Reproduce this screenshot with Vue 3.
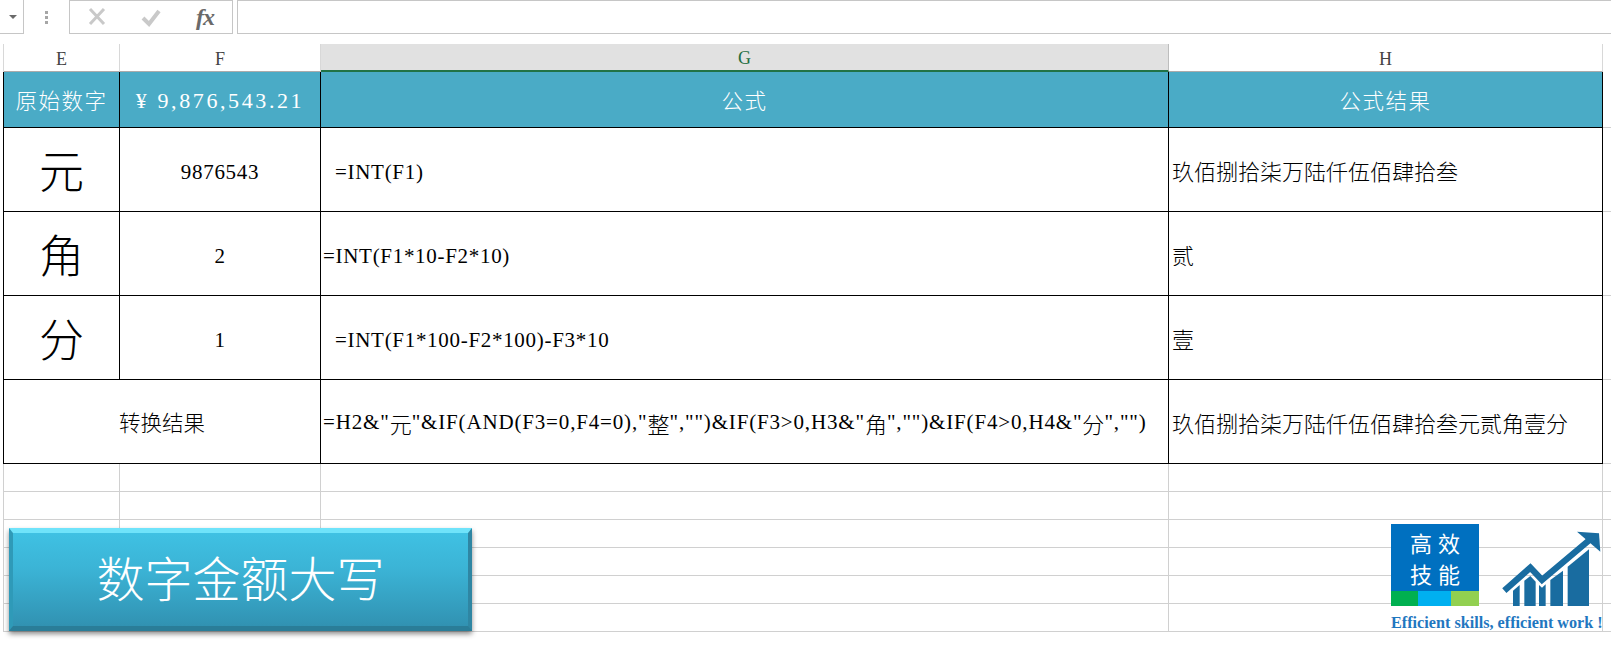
<script setup>
const columns = [
  { name: 'E', cls: '' },
  { name: 'F', cls: '' },
  { name: 'G', cls: 'selected' },
  { name: 'H', cls: '' },
  { name: '', cls: 'last' }
]
const rows = [
  { big: '元', value: '9876543', formula: '=INT(F1)', indent: true, result: '玖佰捌拾柒万陆仟伍佰肆拾叁' },
  { big: '角', value: '2', formula: '=INT(F1*10-F2*10)', indent: false, result: '贰' },
  { big: '分', value: '1', formula: '=INT(F1*100-F2*100)-F3*10', indent: true, result: '壹' }
]
const totalFormula = [
  { t: '=H2&"' }, { t: '元', c: true }, { t: '"&IF(AND(F3=0,F4=0),"' }, { t: '整', c: true },
  { t: '","")&IF(F3>0,H3&"' }, { t: '角', c: true }, { t: '","")&IF(F4>0,H4&"' }, { t: '分', c: true }, { t: '","")' }
]
const emptyRows = [1, 2, 3, 4, 5, 6]
const emptyCols = [1, 2, 3, 4, 5]
</script>

<template>
  <div class="app">
    <div class="toolbar">
      <div class="namebox"><span class="caret"></span></div>
      <div class="dots"><i></i><i></i><i></i></div>
      <div class="fx-buttons">
        <svg class="tool" width="22" height="22" viewBox="0 0 22 22"><path d="M4 3 L18 18 M18 3 L4 18" stroke="#c9c9c9" stroke-width="3" fill="none"/></svg>
        <svg class="tool" width="22" height="22" viewBox="0 0 22 22"><path d="M3 12 L9 18 L19 5" stroke="#c9c9c9" stroke-width="4" fill="none"/></svg>
        <span class="fx">fx</span>
      </div>
      <div class="formula-input"></div>
    </div>

    <div class="sheet">
      <div class="col-headers">
        <div v-for="c in columns" :key="c.name" class="col-header" :class="c.cls">{{ c.name }}</div>
      </div>

      <div class="table">
        <div class="cell head">原始数字</div>
        <div class="cell head amount">¥ 9,876,543.21</div>
        <div class="cell head">公式</div>
        <div class="cell head">公式结果</div>
        <div class="cell blank"></div>

        <template v-for="r in rows" :key="r.big">
          <div class="cell big">{{ r.big }}</div>
          <div class="cell latin center">{{ r.value }}</div>
          <div class="cell latin left" :class="{ indent: r.indent }">{{ r.formula }}</div>
          <div class="cell cjk left">{{ r.result }}</div>
          <div class="cell blank"></div>
        </template>

        <div class="cell cjk center merged">转换结果</div>
        <div class="cell latin left mixed"><template v-for="(p, i) in totalFormula" :key="i"><span v-if="p.c" class="inline-cjk">{{ p.t }}</span><template v-else>{{ p.t }}</template></template></div>
        <div class="cell cjk left">玖佰捌拾柒万陆仟伍佰肆拾叁元贰角壹分</div>
        <div class="cell blank"></div>
      </div>

      <div v-for="n in emptyRows" :key="n" class="grid-row">
        <div v-for="m in emptyCols" :key="m" class="grid-cell"></div>
      </div>

      <div class="shape-button"><span>数字金额大写</span></div>

      <div class="logo">
        <div class="logo-top">
          <div class="logo-box">
            <div class="logo-text">
              <span>高效</span>
              <span>技能</span>
            </div>
            <div class="logo-strip"><i class="s1"></i><i class="s2"></i><i class="s3"></i></div>
          </div>
          <svg class="chart" width="100" height="76" viewBox="422 90 300 228">
            <g fill="#196ca0">
              <polygon points="458,318 458,272 478,255 478,318" />
              <polygon points="492,318 492,242 510,228 526,245 526,318" />
              <polygon points="536,318 536,255 545,263 556,253 556,318" />
              <polygon points="570,318 570,240 608,212 608,318" />
              <polygon points="622,318 622,200 686,148 686,318" />
              <polygon points="650,95 716,100 720,155" />
            </g>
            <polyline points="432,272 510,203 545,240 685,122" fill="none" stroke="#196ca0" stroke-width="19" />
          </svg>
        </div>
        <div class="logo-caption">Efficient skills, efficient work !</div>
      </div>
    </div>
  </div>
</template>

<style scoped>
.app {
  width: 1611px;
  height: 645px;
  overflow: hidden;
  background: #fff;
  position: relative;
  font-family: "Liberation Serif", "Noto Sans CJK SC", serif;
}
.toolbar {
  display: flex;
  height: 34px;
  box-sizing: border-box;
}
.namebox {
  width: 24px;
  height: 34px;
  box-sizing: border-box;
  border: 1px solid #c6c6c6;
  border-left: 0;
  border-top: 0;
  display: flex;
  align-items: center;
  justify-content: center;
}
.caret {
  width: 0;
  height: 0;
  border-left: 4px solid transparent;
  border-right: 4px solid transparent;
  border-top: 4px solid #6a6a6a;
  margin-left: 2px;
}
.dots {
  width: 45px;
  display: flex;
  flex-direction: column;
  align-items: center;
  justify-content: center;
  gap: 2px;
}
.dots i {
  width: 3px;
  height: 3px;
  background: #a6a6a6;
}
.fx-buttons {
  width: 164px;
  height: 34px;
  box-sizing: border-box;
  border: 1px solid #c6c6c6;
  display: flex;
  align-items: center;
  padding-left: 16px;
  gap: 32px;
}
.tool {
  flex: none;
}
.fx {
  font-family: "Liberation Serif", serif;
  font-style: italic;
  font-size: 24px;
  font-weight: bold;
  color: #6a6a6a;
  margin-left: 2px;
  letter-spacing: -1px;
}
.formula-input {
  flex: 1;
  margin-left: 4px;
  height: 34px;
  box-sizing: border-box;
  border: 1px solid #c6c6c6;
  border-right: 0;
}
.sheet {
  padding-top: 10px;
}
.col-headers,
.table,
.grid-row {
  display: grid;
  grid-template-columns: 116px 201px 848px 434px 1fr;
  margin-left: 4px;
}
.col-headers {
  margin-left: 3px;
  border-left: 1px solid #d8d8d8;
}
.col-header {
  height: 28px;
  box-sizing: border-box;
  border-bottom: 1px solid #ababab;
  border-right: 1px solid #d8d8d8;
  display: flex;
  align-items: center;
  justify-content: center;
  padding-top: 3px;
  font-size: 18px;
  color: #444;
}
.col-header.selected {
  background: #e1e1e1;
  color: #1f6e43;
  border-bottom: 2px solid #217346;
  border-right-color: #bdbdbd;
}
.col-header.last {
  border-right: 0;
  border-bottom: 0;
}
.table {
  grid-template-rows: 56px 84px 84px 84px 84px;
}
.cell {
  box-sizing: border-box;
  border-right: 1px solid #000;
  border-bottom: 1px solid #000;
  display: flex;
  align-items: center;
  color: #000;
  white-space: nowrap;
}
.table > .cell:not(.blank):nth-child(5n + 1),
.merged {
  border-left: 1px solid #000;
  margin-left: -1px;
}
.head {
  background: #4aabc6;
  color: #fff;
  justify-content: center;
  font-family: "Noto Sans CJK SC", sans-serif;
  font-weight: 300;
  font-size: 21.5px;
  letter-spacing: 1.5px;
}
.head.amount {
  font-family: "Liberation Serif", serif;
  font-size: 22px;
  font-weight: normal;
  letter-spacing: 2.6px;
  padding-top: 3px;
}
.big {
  justify-content: center;
  font-family: "Noto Sans CJK SC", sans-serif;
  font-weight: 300;
  font-size: 45px;
  color: #000;
}
.latin {
  font-size: 21px;
  letter-spacing: 0.7px;
  padding-top: 5px;
}
.latin.mixed {
  letter-spacing: 0.84px;
  padding-top: 2px;
}
.cjk {
  font-family: "Noto Sans CJK SC", sans-serif;
  font-weight: 300;
  font-size: 22px;
}
.center {
  justify-content: center;
}
.left {
  padding-left: 2px;
}
.cjk.left {
  padding-left: 3px;
}
.cjk.center {
  font-size: 21.5px;
}
.indent {
  padding-left: 14px;
}
.inline-cjk {
  font-family: "Noto Sans CJK SC", sans-serif;
  font-weight: 300;
  font-size: 22px;
  letter-spacing: 0;
}
.merged {
  grid-column: span 2;
}
.blank {
  border-right: 0;
  border-bottom: 1px solid #d0d0d0;
}
.grid-cell {
  height: 28px;
  box-sizing: border-box;
  border-right: 1px solid #d0d0d0;
  border-bottom: 1px solid #d0d0d0;
}
.grid-cell:first-child {
  border-left: 1px solid #d0d0d0;
  margin-left: -1px;
}
.grid-cell:last-child {
  border-right: 0;
}
.shape-button {
  position: absolute;
  left: 9px;
  top: 528px;
  width: 463px;
  height: 103px;
  box-sizing: border-box;
  border-style: solid;
  border-width: 5px 4px 5px 4px;
  border-color: #6fe3fa #2f86a3 #2a7d98 #2f9ab8;
  background: linear-gradient(#3fc1e3 0%, #3bb3d5 40%, #3192b2 100%);
  box-shadow: 0 3px 5px rgba(0, 0, 0, 0.45);
  display: flex;
  align-items: center;
  justify-content: center;
  color: #fff;
  font-family: "Noto Sans CJK SC", sans-serif;
  font-weight: 300;
  font-size: 48px;
  line-height: 1;
}
.shape-button span {
  margin-top: -7px;
}
.logo {
  position: absolute;
  left: 1391px;
  top: 524px;
  width: 215px;
}
.logo-top {
  display: flex;
  align-items: flex-end;
  gap: 22px;
}
.logo-box {
  width: 88px;
  height: 82px;
  background: #0070c0;
  display: flex;
  flex-direction: column;
  flex: none;
}
.logo-text {
  flex: 1;
  display: flex;
  flex-direction: column;
  align-items: center;
  justify-content: center;
  gap: 9px;
  color: #fff;
  font-family: "Noto Sans CJK SC", sans-serif;
  font-weight: 400;
  font-size: 22px;
  line-height: 22px;
  letter-spacing: 6px;
  padding-left: 6px;
  box-sizing: border-box;
}
.logo-strip {
  display: flex;
  height: 15px;
}
.logo-strip i {
  display: block;
}
.s1 {
  width: 27px;
  background: #00b050;
}
.s2 {
  width: 33px;
  background: #00b0f0;
}
.s3 {
  width: 28px;
  background: #92d050;
}
.chart {
  flex: none;
}
.logo-caption {
  margin-top: 8px;
  font-family: "Liberation Serif", serif;
  font-weight: bold;
  font-size: 16.2px;
  line-height: 18px;
  color: #1f77c0;
  white-space: nowrap;
}
</style>
